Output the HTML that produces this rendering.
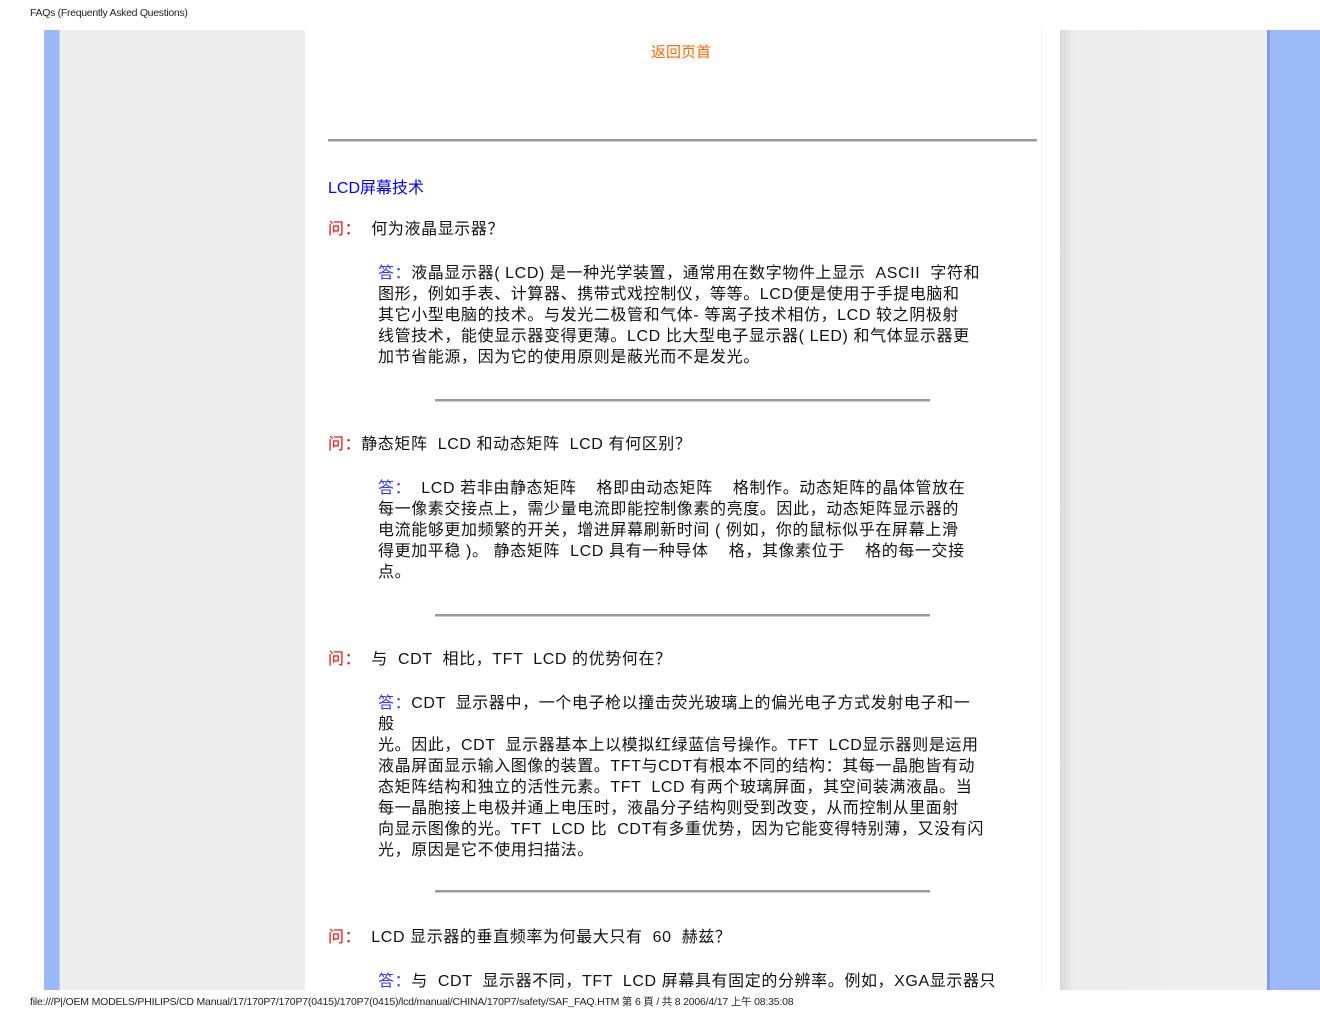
<!DOCTYPE html>
<html><head><meta charset="utf-8"><style>
body{margin:0;width:1320px;height:1020px;position:relative;background:#fff;font-family:"Liberation Sans","Noto Sans CJK SC",sans-serif;overflow:hidden}
.a{position:absolute;white-space:nowrap}
.t{font-size:16px;line-height:21px;color:#111}
.ans{letter-spacing:0.6px}
.r{color:#e00}.b{color:#33f}
.hr{position:absolute;height:2px;background:#999;border-bottom:1px solid #ccc}
</style></head><body>
<div class="a" style="left:30px;top:7px;font-size:10.5px;color:#222;letter-spacing:-0.3px">FAQs (Frequently Asked Questions)</div>
<div class="a" style="left:44px;top:30px;width:15px;height:960px;background:#9bb8f7;border-right:1px solid #b9ccf7"></div>
<div class="a" style="left:60px;top:30px;width:245px;height:960px;background:#ededed"></div>
<div class="a" style="left:1041px;top:30px;width:1px;height:960px;background:#eef2fb"></div>
<div class="a" style="left:1060px;top:30px;width:207px;height:960px;background:linear-gradient(90deg,#d8d8d8,#ededed 14px,#eeeeee)"></div>
<div class="a" style="left:1267px;top:30px;width:3px;height:960px;background:#7f9ce8"></div>
<div class="a" style="left:1270px;top:30px;width:50px;height:960px;background:#9bbaf7"></div>

<div class="a" style="left:651px;top:41px;font-size:15px;color:#f60">返回页首</div>
<div class="hr" style="left:328px;top:139px;width:709px"></div>
<div class="a" style="left:328px;top:174px;font-size:16px;color:#00f">LCD屏幕技术</div>

<div class="a t ans" style="left:328px;top:219px"><span class="r">问：</span>&nbsp; 何为液晶显示器？</div>
<div class="a t ans" style="left:378px;top:263px"><span class="b">答：</span>液晶显示器( LCD) 是一种光学装置，通常用在数字物件上显示 &nbsp;ASCII &nbsp;字符和<br>图形，例如手表、计算器、携带式戏控制仪，等等。LCD便是使用于手提电脑和<br>其它小型电脑的技术。与发光二极管和气体- 等离子技术相仿，LCD 较之阴极射<br>线管技术，能使显示器变得更薄。LCD 比大型电子显示器( LED) 和气体显示器更<br>加节省能源，因为它的使用原则是蔽光而不是发光。</div>
<div class="hr" style="left:435px;top:399px;width:495px"></div>

<div class="a t ans" style="left:328px;top:434px"><span class="r">问：</span>静态矩阵 &nbsp;LCD 和动态矩阵 &nbsp;LCD 有何区别？</div>
<div class="a t ans" style="left:378px;top:478px"><span class="b">答：</span> &nbsp;LCD 若非由静态矩阵 &nbsp; &nbsp;格即由动态矩阵 &nbsp; &nbsp;格制作。动态矩阵的晶体管放在<br>每一像素交接点上，需少量电流即能控制像素的亮度。因此，动态矩阵显示器的<br>电流能够更加频繁的开关，增进屏幕刷新时间 ( 例如，你的鼠标似乎在屏幕上滑<br>得更加平稳 )。 静态矩阵 &nbsp;LCD 具有一种导体 &nbsp; &nbsp;格，其像素位于 &nbsp; &nbsp;格的每一交接<br>点。</div>
<div class="hr" style="left:435px;top:614px;width:495px"></div>

<div class="a t ans" style="left:328px;top:649px"><span class="r">问：</span>&nbsp; 与 &nbsp;CDT &nbsp;相比，TFT &nbsp;LCD 的优势何在？</div>
<div class="a t ans" style="left:378px;top:693px"><span class="b">答：</span>CDT &nbsp;显示器中，一个电子枪以撞击荧光玻璃上的偏光电子方式发射电子和一<br>般<br>光。因此，CDT &nbsp;显示器基本上以模拟红绿蓝信号操作。TFT &nbsp;LCD显示器则是运用<br>液晶屏面显示输入图像的装置。TFT与CDT有根本不同的结构：其每一晶胞皆有动<br>态矩阵结构和独立的活性元素。TFT &nbsp;LCD 有两个玻璃屏面，其空间装满液晶。当<br>每一晶胞接上电极并通上电压时，液晶分子结构则受到改变，从而控制从里面射<br>向显示图像的光。TFT &nbsp;LCD 比 &nbsp;CDT有多重优势，因为它能变得特别薄，又没有闪<br>光，原因是它不使用扫描法。</div>
<div class="hr" style="left:435px;top:890px;width:495px"></div>

<div class="a t ans" style="left:328px;top:927px"><span class="r">问：</span>&nbsp; LCD 显示器的垂直频率为何最大只有 &nbsp;60 &nbsp;赫兹？</div>
<div class="a t ans" style="left:378px;top:971px;height:19px;overflow:hidden"><span class="b">答：</span>与 &nbsp;CDT &nbsp;显示器不同，TFT &nbsp;LCD 屏幕具有固定的分辨率。例如，XGA显示器只</div>

<div class="a" style="left:30px;top:994px;font-size:10.5px;color:#222;letter-spacing:-0.2px">file:///P|/OEM MODELS/PHILIPS/CD Manual/17/170P7/170P7(0415)/170P7(0415)/lcd/manual/CHINA/170P7/safety/SAF_FAQ.HTM 第 6 頁 / 共 8 2006/4/17 上午 08:35:08</div>
</body></html>
